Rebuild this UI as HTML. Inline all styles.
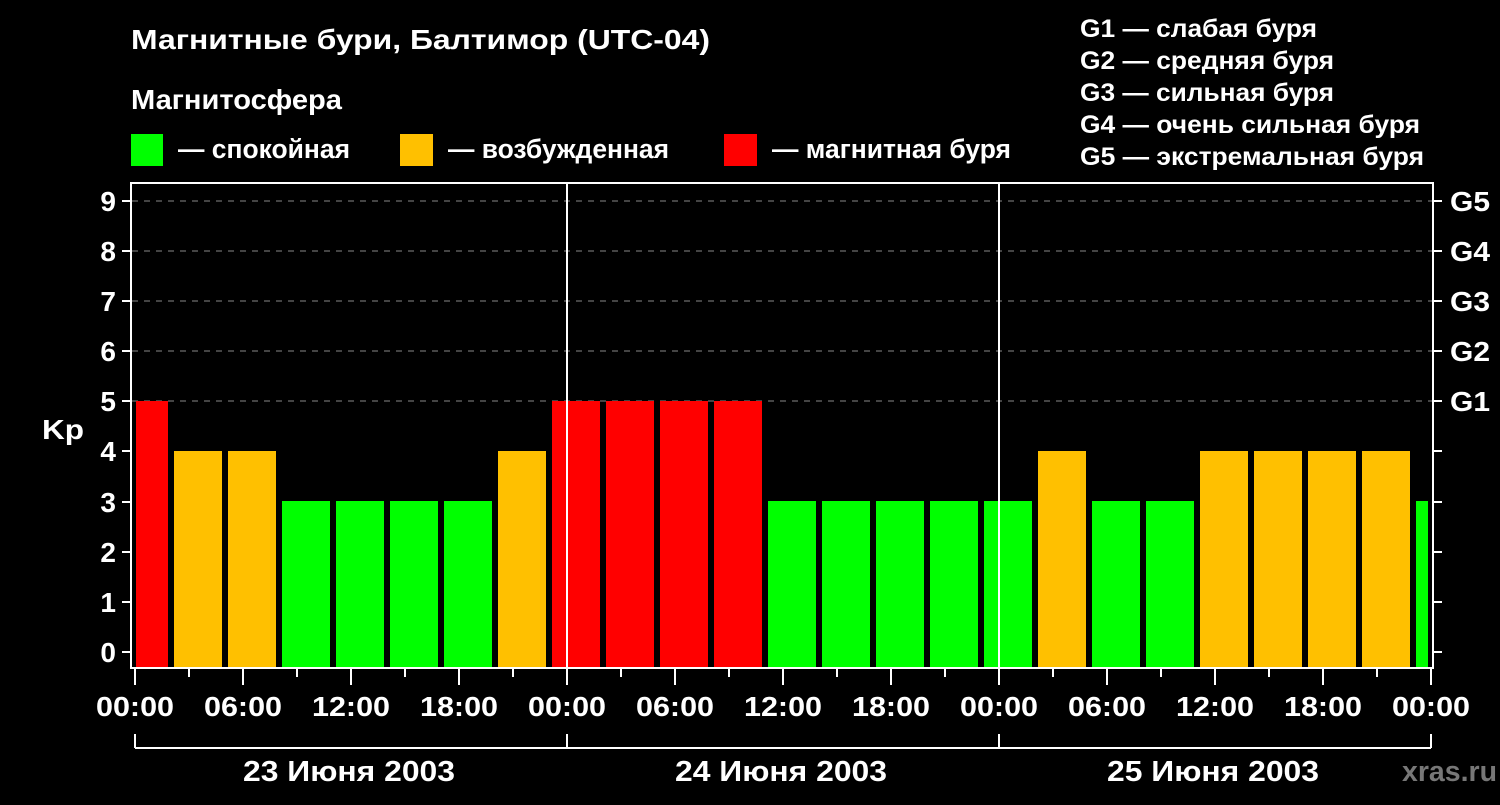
<!DOCTYPE html>
<html><head><meta charset="utf-8"><style>
body{margin:0;background:#000;width:1500px;height:800px;overflow:hidden;font-family:"Liberation Sans",sans-serif;}
</style></head><body>
<svg width="1500" height="800" xmlns="http://www.w3.org/2000/svg" font-family="Liberation Sans, sans-serif" font-weight="bold" fill="#fff">
<rect width="1500" height="800" fill="#000"/>
<text x="131" y="49" font-size="28" textLength="579" lengthAdjust="spacingAndGlyphs">Магнитные бури, Балтимор (UTC-04)</text>
<text x="131" y="109" font-size="28" textLength="211" lengthAdjust="spacingAndGlyphs">Магнитосфера</text>
<rect x="131" y="134" width="32" height="32" fill="#00ff00"/>
<text x="178" y="158" font-size="27" textLength="172" lengthAdjust="spacingAndGlyphs">— спокойная</text>
<rect x="400" y="134" width="33" height="32" fill="#ffc000"/>
<text x="448" y="158" font-size="27" textLength="221" lengthAdjust="spacingAndGlyphs">— возбужденная</text>
<rect x="724" y="134" width="33" height="32" fill="#ff0000"/>
<text x="772" y="158" font-size="27" textLength="239" lengthAdjust="spacingAndGlyphs">— магнитная буря</text>
<g font-size="25">
<text x="1080" y="37" textLength="237" lengthAdjust="spacingAndGlyphs">G1 — слабая буря</text>
<text x="1080" y="69" textLength="254" lengthAdjust="spacingAndGlyphs">G2 — средняя буря</text>
<text x="1080" y="101" textLength="254" lengthAdjust="spacingAndGlyphs">G3 — сильная буря</text>
<text x="1080" y="133" textLength="340" lengthAdjust="spacingAndGlyphs">G4 — очень сильная буря</text>
<text x="1080" y="165" textLength="344" lengthAdjust="spacingAndGlyphs">G5 — экстремальная буря</text>
</g>
<g stroke="#888" stroke-width="1" stroke-dasharray="6,6">
<line x1="132" y1="201" x2="1432" y2="201"/>
<line x1="132" y1="251" x2="1432" y2="251"/>
<line x1="132" y1="301" x2="1432" y2="301"/>
<line x1="132" y1="351" x2="1432" y2="351"/>
<line x1="132" y1="401" x2="1432" y2="401"/>
</g>
<g>
<rect x="136" y="401" width="32" height="266" fill="#ff0000"/>
<rect x="174" y="451" width="48" height="216" fill="#ffc000"/>
<rect x="228" y="451" width="48" height="216" fill="#ffc000"/>
<rect x="282" y="501" width="48" height="166" fill="#00ff00"/>
<rect x="336" y="501" width="48" height="166" fill="#00ff00"/>
<rect x="390" y="501" width="48" height="166" fill="#00ff00"/>
<rect x="444" y="501" width="48" height="166" fill="#00ff00"/>
<rect x="498" y="451" width="48" height="216" fill="#ffc000"/>
<rect x="552" y="401" width="48" height="266" fill="#ff0000"/>
<rect x="606" y="401" width="48" height="266" fill="#ff0000"/>
<rect x="660" y="401" width="48" height="266" fill="#ff0000"/>
<rect x="714" y="401" width="48" height="266" fill="#ff0000"/>
<rect x="768" y="501" width="48" height="166" fill="#00ff00"/>
<rect x="822" y="501" width="48" height="166" fill="#00ff00"/>
<rect x="876" y="501" width="48" height="166" fill="#00ff00"/>
<rect x="930" y="501" width="48" height="166" fill="#00ff00"/>
<rect x="984" y="501" width="48" height="166" fill="#00ff00"/>
<rect x="1038" y="451" width="48" height="216" fill="#ffc000"/>
<rect x="1092" y="501" width="48" height="166" fill="#00ff00"/>
<rect x="1146" y="501" width="48" height="166" fill="#00ff00"/>
<rect x="1200" y="451" width="48" height="216" fill="#ffc000"/>
<rect x="1254" y="451" width="48" height="216" fill="#ffc000"/>
<rect x="1308" y="451" width="48" height="216" fill="#ffc000"/>
<rect x="1362" y="451" width="48" height="216" fill="#ffc000"/>
<rect x="1416" y="501" width="12" height="166" fill="#00ff00"/>
</g>
<g stroke="#fff" stroke-width="2" fill="none">
<rect x="131" y="183" width="1302" height="485"/>
<line x1="567" y1="183" x2="567" y2="668"/>
<line x1="999" y1="183" x2="999" y2="668"/>
<path d="M122 201h9M122 251h9M122 301h9M122 351h9M122 401h9M122 451h9M122 502h9M122 552h9M122 602h9M122 652h9"/>
<path d="M1433 201h9M1433 251h9M1433 301h9M1433 351h9M1433 401h9M1433 451h9M1433 502h9M1433 552h9M1433 602h9M1433 652h9"/>
<path d="M135 668v17M243 668v17M351 668v17M459 668v17M567 668v17M675 668v17M783 668v17M891 668v17M999 668v17M1107 668v17M1215 668v17M1323 668v17M1431 668v17"/>
<path d="M189 668v9M297 668v9M405 668v9M513 668v9M621 668v9M729 668v9M837 668v9M945 668v9M1053 668v9M1161 668v9M1269 668v9M1377 668v9"/>
<path d="M135 734v14M567 734v14M999 734v14M1431 734v14M135 748H1431"/>
</g>
<g font-size="28" text-anchor="end">
<text x="116" y="211">9</text><text x="116" y="261">8</text><text x="116" y="311">7</text><text x="116" y="361">6</text><text x="116" y="411">5</text><text x="116" y="461">4</text><text x="116" y="512">3</text><text x="116" y="562">2</text><text x="116" y="612">1</text><text x="116" y="662">0</text>
</g>
<text x="42" y="439" font-size="28" textLength="42" lengthAdjust="spacingAndGlyphs">Kp</text>
<g font-size="28">
<text x="1450" y="211" textLength="40" lengthAdjust="spacingAndGlyphs">G5</text><text x="1450" y="261" textLength="40" lengthAdjust="spacingAndGlyphs">G4</text><text x="1450" y="311" textLength="40" lengthAdjust="spacingAndGlyphs">G3</text><text x="1450" y="361" textLength="40" lengthAdjust="spacingAndGlyphs">G2</text><text x="1450" y="411" textLength="40" lengthAdjust="spacingAndGlyphs">G1</text>
</g>
<g font-size="28">
<text x="96" y="716" textLength="78" lengthAdjust="spacingAndGlyphs">00:00</text><text x="204" y="716" textLength="78" lengthAdjust="spacingAndGlyphs">06:00</text><text x="312" y="716" textLength="78" lengthAdjust="spacingAndGlyphs">12:00</text><text x="420" y="716" textLength="78" lengthAdjust="spacingAndGlyphs">18:00</text>
<text x="528" y="716" textLength="78" lengthAdjust="spacingAndGlyphs">00:00</text><text x="636" y="716" textLength="78" lengthAdjust="spacingAndGlyphs">06:00</text><text x="744" y="716" textLength="78" lengthAdjust="spacingAndGlyphs">12:00</text><text x="852" y="716" textLength="78" lengthAdjust="spacingAndGlyphs">18:00</text>
<text x="960" y="716" textLength="78" lengthAdjust="spacingAndGlyphs">00:00</text><text x="1068" y="716" textLength="78" lengthAdjust="spacingAndGlyphs">06:00</text><text x="1176" y="716" textLength="78" lengthAdjust="spacingAndGlyphs">12:00</text><text x="1284" y="716" textLength="78" lengthAdjust="spacingAndGlyphs">18:00</text>
<text x="1392" y="716" textLength="78" lengthAdjust="spacingAndGlyphs">00:00</text>
</g>
<g font-size="29">
<text x="243" y="781" textLength="212" lengthAdjust="spacingAndGlyphs">23 Июня 2003</text>
<text x="675" y="781" textLength="212" lengthAdjust="spacingAndGlyphs">24 Июня 2003</text>
<text x="1107" y="781" textLength="212" lengthAdjust="spacingAndGlyphs">25 Июня 2003</text>
</g>
<text x="1402" y="781" font-size="29" fill="#777" textLength="95" lengthAdjust="spacingAndGlyphs">xras.ru</text>
</svg>
</body></html>
